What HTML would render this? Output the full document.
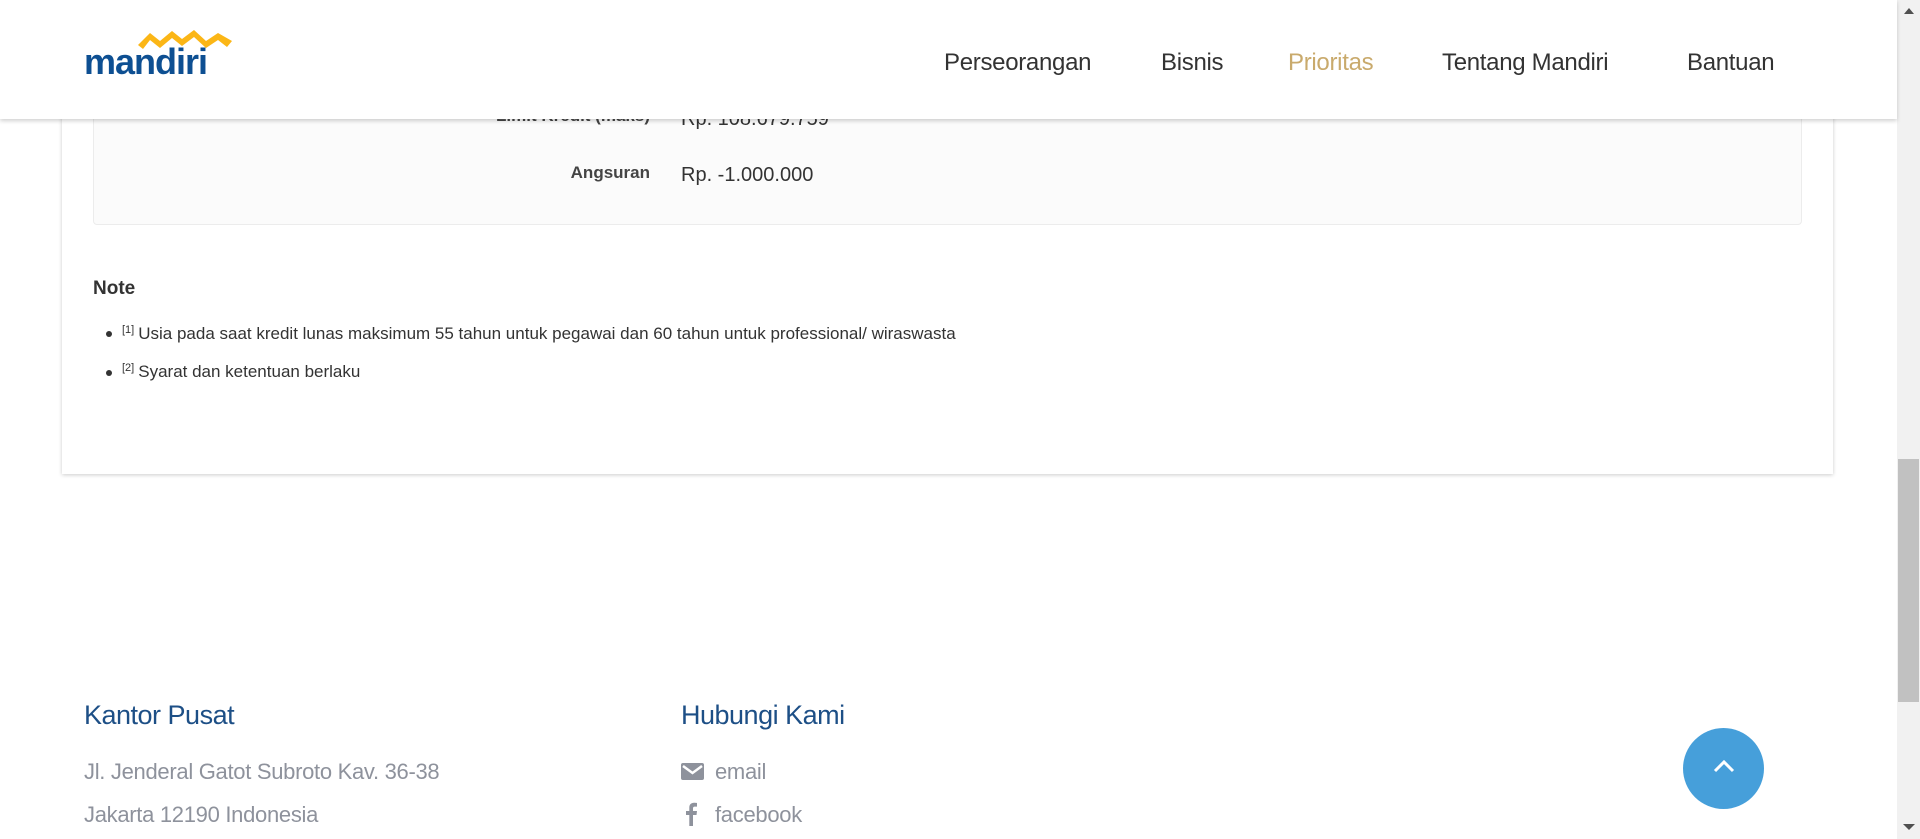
<!DOCTYPE html>
<html><head><meta charset="utf-8"><style>
*{margin:0;padding:0;box-sizing:border-box}
body{width:1920px;height:839px;overflow:hidden;background:#fff;font-family:"Liberation Sans",sans-serif;position:relative}
.abs{position:absolute;white-space:nowrap}
.hdr{position:absolute;left:0;top:0;width:1897px;height:119px;background:#fff;box-shadow:0 2px 4px rgba(0,0,0,.18);z-index:5}
.nav{position:absolute;top:49px;font-size:24px;color:#333;letter-spacing:-0.3px}
.card{position:absolute;left:62px;top:-20px;width:1771px;height:494px;background:#fff;box-shadow:0 1px 4px rgba(0,0,0,.2)}
.box{position:absolute;left:93px;top:-10px;width:1709px;height:235px;background:#fbfbfb;border:1px solid #ececec;border-radius:4px}
.lbl{font-size:17px;font-weight:bold;color:#444;text-align:right;width:300px;left:350px}
.val{font-size:20px;color:#333;left:681px}
.li{font-size:17px;color:#333;left:122px}
.li sup{font-size:11px;vertical-align:6px;margin-right:4px}
.dot{position:absolute;left:106px;width:6px;height:6px;border-radius:50%;background:#333}
.fh{font-size:27px;color:#1d4f86;letter-spacing:-0.5px}
.ft{font-size:22px;color:#8e929c;letter-spacing:-0.3px}
</style></head><body>
<div class="card"></div>
<div class="box"></div>
<div class="abs lbl" style="top:106px">Limit Kredit (maks)</div>
<div class="abs val" style="top:108px">Rp. 108.679.759</div>
<div class="abs lbl" style="top:163px">Angsuran</div>
<div class="abs val" style="top:164px">Rp. -1.000.000</div>
<div class="abs" style="left:93px;top:278px;font-size:19px;font-weight:bold;color:#333">Note</div>
<div class="dot" style="top:331px"></div>
<div class="abs li" style="top:324px"><sup>[1]</sup>Usia pada saat kredit lunas maksimum 55 tahun untuk pegawai dan 60 tahun untuk professional/ wiraswasta</div>
<div class="dot" style="top:370px"></div>
<div class="abs li" style="top:362px"><sup>[2]</sup>Syarat dan ketentuan berlaku</div>

<div class="hdr">
 <svg class="abs" style="left:136px;top:29px" width="102" height="22" viewBox="0 0 102 22"><path d="M2 16 L14 4 L24 12 L36 2 L46 10 L58 1 L70 12 L82 4 L96 12 L91 18 L82 11 L70 19 L58 8 L46 17 L36 9 L24 19 L14 11 L7 20 Z" fill="#fbb616"/></svg>
 <div class="abs" style="left:84px;top:41px;font-size:36px;font-weight:bold;color:#0d4f92;letter-spacing:-1px">mandiri</div>
 <div class="nav abs" style="left:944px">Perseorangan</div>
 <div class="nav abs" style="left:1161px">Bisnis</div>
 <div class="nav abs" style="left:1288px;color:#c9aa6c">Prioritas</div>
 <div class="nav abs" style="left:1442px">Tentang Mandiri</div>
 <div class="nav abs" style="left:1687px">Bantuan</div>
</div>

<div class="abs fh" style="left:84px;top:700px">Kantor Pusat</div>
<div class="abs fh" style="left:681px;top:700px">Hubungi Kami</div>
<div class="abs ft" style="left:84px;top:759px">Jl. Jenderal Gatot Subroto Kav. 36-38</div>
<div class="abs ft" style="left:84px;top:802px">Jakarta 12190 Indonesia</div>
<svg class="abs" style="left:681px;top:763px" width="23" height="17" viewBox="0 0 23 17"><rect width="23" height="17" rx="2" fill="#8e929c"/><path d="M2 3 L11.5 10 L21 3" stroke="#fff" stroke-width="2.5" fill="none"/></svg>
<div class="abs ft" style="left:715px;top:759px">email</div>
<svg class="abs" style="left:684px;top:802px" width="14" height="24" viewBox="0 0 14 24"><path d="M9 24 V13 H12.5 L13 9 H9 V6.5 C9 5.4 9.4 4.6 11 4.6 H13 V1 C12.5 1 11.3 0.8 10 0.8 C7.2 0.8 5.3 2.5 5.3 5.6 V9 H2 V13 H5.3 V24 Z" fill="#8e929c"/></svg>
<div class="abs ft" style="left:715px;top:802px">facebook</div>

<div class="abs" style="left:1683px;top:728px;width:81px;height:81px;border-radius:50%;background:#469fda"></div>
<svg class="abs" style="left:1713px;top:759px" width="22" height="16" viewBox="0 0 22 16"><path d="M2 12 L11 3 L20 12" stroke="#fff" stroke-width="3" fill="none"/></svg>

<div class="abs" style="left:1897px;top:0;width:23px;height:839px;background:#f1f1f1"></div>
<div class="abs" style="left:1898px;top:459px;width:21px;height:243px;background:#c1c1c1"></div>
<div class="abs" style="left:1904px;top:8px;width:0;height:0;border-left:5px solid transparent;border-right:5px solid transparent;border-bottom:6px solid #505050"></div>
<div class="abs" style="left:1903px;top:824px;width:0;height:0;border-left:6px solid transparent;border-right:6px solid transparent;border-top:6px solid #505050"></div>
</body></html>
